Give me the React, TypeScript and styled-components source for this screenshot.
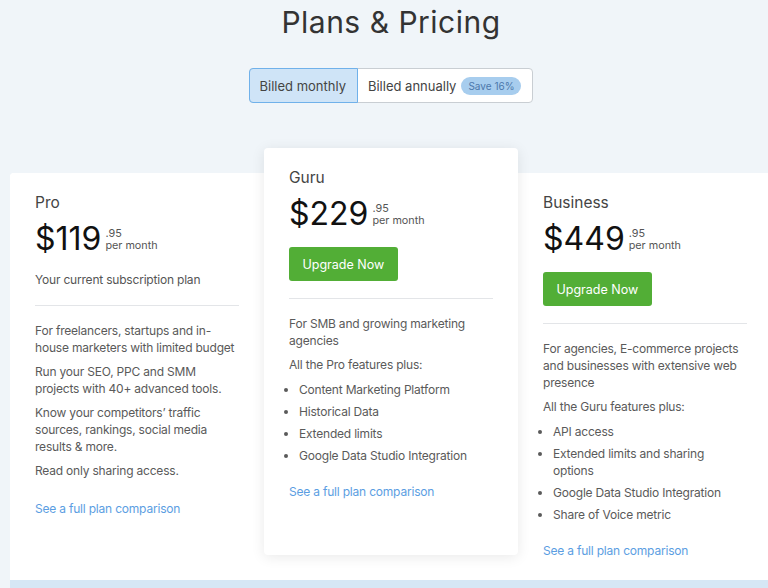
import React from "react";
import styled, { createGlobalStyle } from "styled-components";

/*--------------------------------------------------------------*/

interface Plan {
  name: string;
  dollars: string;
  cents: string;
  current?: boolean;
  featured?: boolean;
  paragraphs: string[];
  intro?: string;
  features?: string[];
}

const plans: Plan[] = [
  {
    name: "Pro",
    dollars: "$119",
    cents: ".95",
    current: true,
    paragraphs: [
      "For freelancers, startups and in-house marketers with limited budget",
      "Run your SEO, PPC and SMM projects with 40+ advanced tools.",
      "Know your competitors’ traffic sources, rankings, social media results & more.",
      "Read only sharing access.",
    ],
  },
  {
    name: "Guru",
    dollars: "$229",
    cents: ".95",
    featured: true,
    paragraphs: ["For SMB and growing marketing agencies"],
    intro: "All the Pro features plus:",
    features: [
      "Content Marketing Platform",
      "Historical Data",
      "Extended limits",
      "Google Data Studio Integration",
    ],
  },
  {
    name: "Business",
    dollars: "$449",
    cents: ".95",
    paragraphs: [
      "For agencies, E-commerce projects and businesses with extensive web presence",
    ],
    intro: "All the Guru features plus:",
    features: [
      "API access",
      "Extended limits and sharing options",
      "Google Data Studio Integration",
      "Share of Voice metric",
    ],
  },
];

/*--------------------------------------------------------------*/

export default function App() {
  return (
    <>
      <GlobalStyle />
      <Page>
        <Title>Plans &amp; Pricing</Title>

        <Toggle>
          <ToggleOption active>Billed monthly</ToggleOption>
          <ToggleOption>
            Billed annually <Badge>Save 16%</Badge>
          </ToggleOption>
        </Toggle>

        {/* -------------------------------------------------------------- */}

        <Plans>
          {plans.map((plan) => (
            <Card key={plan.name} featured={plan.featured}>
              <PlanName>{plan.name}</PlanName>
              <PriceRow>
                <Dollars>{plan.dollars}</Dollars>
                <PriceMeta>
                  <span>{plan.cents}</span>
                  <span>per month</span>
                </PriceMeta>
              </PriceRow>

              {plan.current ? (
                <Current>Your current subscription plan</Current>
              ) : (
                <UpgradeButton>Upgrade Now</UpgradeButton>
              )}

              <Divider />

              {plan.paragraphs.map((p) => (
                <Text key={p}>{p}</Text>
              ))}
              {plan.intro && <Text>{plan.intro}</Text>}
              {plan.features && (
                <Features>
                  {plan.features.map((f) => (
                    <li key={f}>{f}</li>
                  ))}
                </Features>
              )}

              <Comparison href="#">See a full plan comparison</Comparison>
            </Card>
          ))}
        </Plans>

        <Band />
      </Page>
    </>
  );
}

/*--------------------------------------------------------------*/

const GlobalStyle = createGlobalStyle`
  html, body {
    margin: 0;
    padding: 0;
    background: #f0f5f9;
  }
  body {
    font-family: Inter, "Noto Sans", sans-serif;
    color: #555;
    overflow: hidden;
  }
`;

// The page column runs from x=10 and is wider than the window, so it is clipped on the right
const Page = styled.div`
  display: flex;
  flex-direction: column;
  align-items: center;
  width: 762px;
  height: 588px;
  margin-left: 10px;
`;

const Title = styled.h1`
  margin: 4px 0 0;
  font-size: 30px;
  line-height: 36px;
  font-weight: 400;
  letter-spacing: 0.5px;
  color: #333;
`;

const Toggle = styled.div`
  display: flex;
  margin-top: 28px;
  height: 35px;
  box-sizing: border-box;
  border: 1px solid #c9ced3;
  border-radius: 4px;
  background: #fff;
`;

const ToggleOption = styled.div<{ active?: boolean }>`
  display: flex;
  align-items: center;
  gap: 5px;
  padding: 0 11px 0 10px;
  margin: -1px 0;
  font-size: 13px;
  color: #444;
  border-radius: ${({ active }) => (active ? "4px 0 0 4px" : "0")};
  background: ${({ active }) => (active ? "#cfe4f7" : "transparent")};
  border: ${({ active }) => (active ? "1px solid #70b1ea" : "none")};
  margin-left: ${({ active }) => (active ? "-1px" : "0")};
`;

const Badge = styled.span`
  display: inline-block;
  padding: 2px 7px;
  font-size: 10px;
  line-height: 14px;
  border-radius: 9px;
  background: #a7cdee;
  color: #4c78ab;
`;

/*--------------------------------------------------------------*/

const Plans = styled.div`
  align-self: stretch;
  display: grid;
  grid-template-columns: 254px 254px 254px;
  margin-top: 70px;
  background: #fff;
  border-radius: 4px 0 0 0;
`;

const Card = styled.div<{ featured?: boolean }>`
  position: relative;
  z-index: ${({ featured }) => (featured ? 1 : 0)};
  align-self: start;
  display: flex;
  flex-direction: column;
  align-items: flex-start;
  padding: ${({ featured }) =>
    featured ? "20px 25px 55px 25px" : "20px 25px 21px 25px"};
  margin-top: ${({ featured }) => (featured ? "-25px" : "0")};
  background: #fff;
  border-radius: 4px;
  box-shadow: ${({ featured }) =>
    featured ? "0 2px 14px rgba(0, 0, 0, 0.09)" : "none"};
`;

const PlanName = styled.div`
  font-size: 15.5px;
  line-height: 20px;
  color: #444;
`;

const PriceRow = styled.div`
  display: flex;
  align-items: center;
  gap: 4px;
  margin-top: 8px;
  height: 36px;
`;

const Dollars = styled.span`
  font-size: 32px;
  line-height: 36px;
  color: #111;
`;

const PriceMeta = styled.span`
  display: flex;
  flex-direction: column;
  margin-top: 1px;
  font-size: 10.8px;
  line-height: 12px;
  color: #555;
`;

const Current = styled.div`
  margin-top: 14px;
  font-size: 12px;
  line-height: 17px;
  letter-spacing: -0.2px;
`;

const UpgradeButton = styled.button`
  margin-top: 15px;
  height: 34px;
  padding: 0 13.5px;
  border: none;
  border-radius: 3px;
  background: #52ae36;
  color: #fff;
  font-family: inherit;
  font-size: 12.5px;
  cursor: pointer;
`;

const Divider = styled.hr`
  width: 204px;
  margin: 17px 0 16px;
  border: none;
  border-top: 1px solid #e3e5e8;
`;

const Text = styled.p`
  margin: 0 0 7px;
  font-size: 12px;
  line-height: 17px;
  letter-spacing: -0.2px;
  color: #5a5a5a;
`;

const Features = styled.ul`
  margin: 1px 0 0;
  padding-left: 10px;
  font-size: 12px;
  line-height: 17px;
  letter-spacing: -0.2px;
  color: #5a5a5a;

  & > li {
    margin-bottom: 5px;
  }
`;

const Comparison = styled.a`
  margin-top: 14px;
  font-size: 12px;
  line-height: 17px;
  letter-spacing: -0.2px;
  color: #5b9ee2;
  text-decoration: none;
`;

const Band = styled.div`
  align-self: stretch;
  flex: 1;
  background: #d6e7f5;
`;
